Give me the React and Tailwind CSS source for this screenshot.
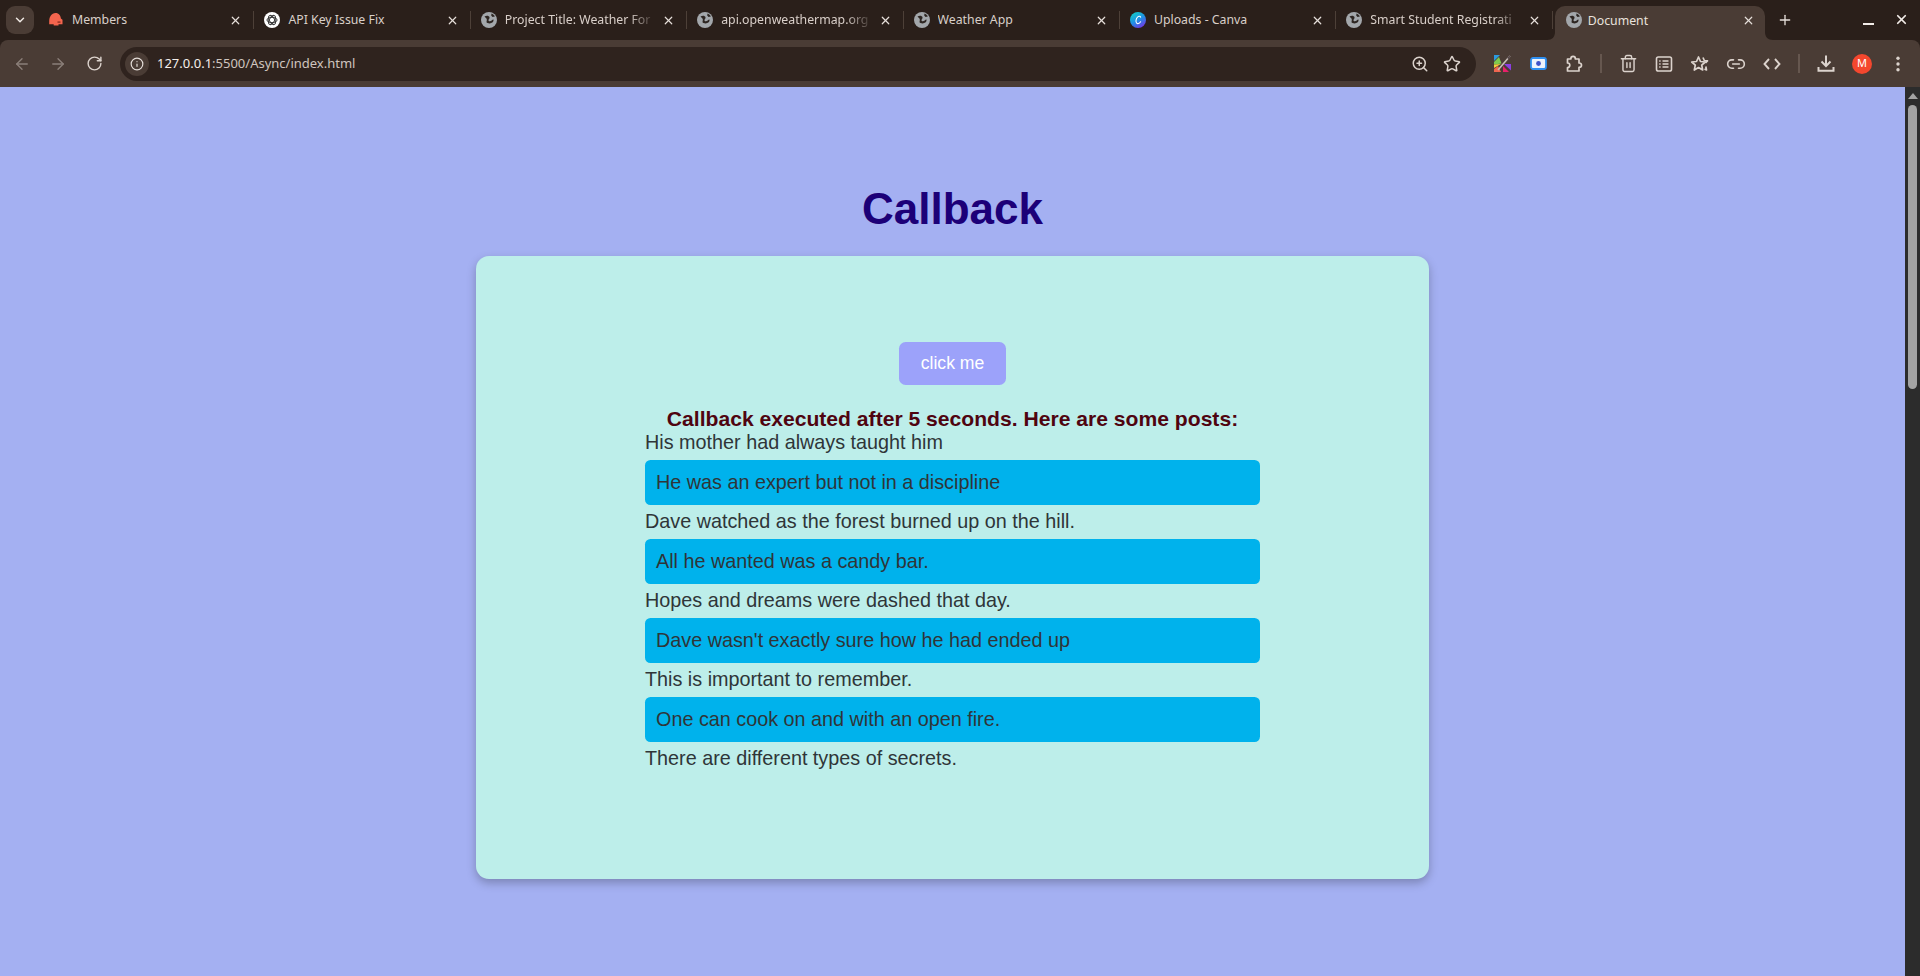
import React from "react";
import {
  ArrowLeft,
  ArrowRight,
  RotateCw,
  Info,
  ZoomIn,
  Star,
  Trash2,
  Link2,
  ChevronDown,
  X,
  Plus,
} from "lucide-react";

const tabs = [
  { title: "Members", icon: "members" },
  { title: "API Key Issue Fix", icon: "gpt" },
  { title: "Project Title: Weather For", icon: "globe", fade: true },
  { title: "api.openweathermap.org", icon: "globe", fade: true },
  { title: "Weather App", icon: "globe" },
  { title: "Uploads - Canva", icon: "canva" },
  { title: "Smart Student Registrati", icon: "globe", fade: true },
];

const posts = [
  { text: "His mother had always taught him" },
  { text: "He was an expert but not in a discipline", blue: true },
  { text: "Dave watched as the forest burned up on the hill." },
  { text: "All he wanted was a candy bar.", blue: true },
  { text: "Hopes and dreams were dashed that day." },
  { text: "Dave wasn't exactly sure how he had ended up", blue: true },
  { text: "This is important to remember." },
  { text: "One can cook on and with an open fire.", blue: true },
  { text: "There are different types of secrets." },
];

function Favicon({ type }) {
  if (type === "members") {
    return (
      <svg width="16" height="16" viewBox="0 0 16 16" className="shrink-0">
        <path d="M7.5 1c3.400 0 5.200 2.500 5.400 5.600l1.600 1.200v4.400h-4v1.300H5.700v-1.300H1.200V9.400C1.200 4.600 3.600 1 7.500 1z" fill="#f4654e" />
        <path d="M9.500 9.400h3v1.400h-3z" fill="#8e2f22" />
      </svg>
    );
  }
  if (type === "gpt") {
    return (
      <svg width="16" height="16" viewBox="0 0 16 16" className="shrink-0">
        <circle cx="8" cy="8" r="8" fill="#fff" />
        <g fill="none" stroke="#3a3a3a" strokeWidth="1">
          <ellipse cx="8" cy="8" rx="5" ry="2.600" />
          <ellipse cx="8" cy="8" rx="5" ry="2.600" transform="rotate(60 8 8)" />
          <ellipse cx="8" cy="8" rx="5" ry="2.600" transform="rotate(120 8 8)" />
        </g>
      </svg>
    );
  }
  if (type === "canva") {
    return (
      <svg width="16" height="16" viewBox="0 0 16 16" className="shrink-0">
        <defs>
          <linearGradient id="canvaGrad" x1="0.2" y1="0" x2="0.8" y2="1">
            <stop offset="0" stopColor="#13d0c8" />
            <stop offset="0.5" stopColor="#1f8fe4" />
            <stop offset="1" stopColor="#7b2fe3" />
          </linearGradient>
        </defs>
        <circle cx="8" cy="8" r="8" fill="url(#canvaGrad)" />
        <path d="M10.600 5.200C10.200 3.700 8 4 6.700 6.200c-1.300 2.400-.8 5.300 1 5.400 1.200.1 2.200-.7 2.900-1.800" fill="none" stroke="#fff" strokeWidth="1.100" strokeLinecap="round" />
      </svg>
    );
  }
  // globo padrao do chrome
  return (
    <svg width="16" height="16" viewBox="0 0 16 16" className="shrink-0">
      <circle cx="8" cy="8" r="8" fill="#a3a7ab" />
      <path d="M3.500 4.500c2-1.300 4.500-.9 5 .7.4 1.400-1 1.900-1 3 0 1.300 2 1.300 3.200.4l1.500-1.300c.6 1.200.3 2.200-.5 3-1.300 1.200-3.500 1.400-5.200.7C4.800 10.400 6 8.600 5.800 7.400 5.600 6.200 4.400 5.800 3.500 4.500z" fill="#2e2622" />
      <path d="M10.500 1.400c1.500.6 2.700 1.600 3.400 3l-2.400.6-1.300-1.400z" fill="#2e2622" />
    </svg>
  );
}

function Tab({ tab }) {
  return (
    <div className="relative flex items-center w-[216.4px] h-[28px] pl-[10px] pr-[12px] shrink-0">
      <Favicon type={tab.icon} />
      <span
        className={`ml-[8px] flex-1 overflow-hidden whitespace-nowrap text-[12.3px] text-[#d9cfc9] ${
          tab.fade ? "[mask-image:linear-gradient(to_right,black_82%,transparent)]" : ""
        }`}
      >
        {tab.title}
      </span>
      <X size={13} className="ml-[6px] text-[#e6dfda] shrink-0" strokeWidth={2.2} />
      <div className="absolute right-0 top-[5px] w-px h-[18px] bg-[#4d4038]" />
    </div>
  );
}

// cada icone da barra ocupa uma celula de 36px
function Cell({ children }) {
  return <div className="w-[36px] h-[36px] flex items-center justify-center shrink-0">{children}</div>;
}

function Divider() {
  return (
    <div className="w-[18px] flex justify-center shrink-0">
      <div className="w-[2px] h-[19px] bg-[#66574f]" />
    </div>
  );
}

const iconColor = "text-[#dcd3cd]";

export default function App() {
  return (
    <div className="h-screen overflow-hidden flex flex-col font-['Liberation_Sans',Arial,sans-serif]">
      {/* barra do navegador */}
      <div className="h-[87px] shrink-0 bg-[#2a1f1a] flex flex-col font-['Noto_Sans',sans-serif]">
        <div className="h-[40px] flex items-start pt-[6px] pl-[6px] shrink-0">
          <div className="w-[28px] h-[28px] rounded-[9px] bg-[#4a3c35] flex items-center justify-center shrink-0">
            <ChevronDown size={14} className="text-[#f0e9e4]" strokeWidth={2.5} />
          </div>
          <div className="flex ml-[4px]">
            {tabs.map((tab) => (
              <Tab key={tab.title} tab={tab} />
            ))}
          </div>
          {/* aba ativa */}
          <div className="relative ml-[2px] w-[210px] h-[34px] rounded-t-[10px] bg-[#4a3c35] flex items-start pt-[6px] pl-[11px] pr-[10px] shrink-0">
            <svg width="8" height="8" viewBox="0 0 8 8" className="absolute -left-[8px] bottom-0">
              <path d="M8 0v8H0c5 0 8-3 8-8z" fill="#4a3c35" />
            </svg>
            <Favicon type="globe" />
            <span className="ml-[6px] flex-1 text-[12.3px] text-[#e9e2dd]">Document</span>
            <X size={13} className="mt-[2px] text-[#e6dfda]" strokeWidth={2.2} />
            <svg width="8" height="8" viewBox="0 0 8 8" className="absolute -right-[8px] bottom-0">
              <path d="M0 0v8h8C3 8 0 5 0 0z" fill="#4a3c35" />
            </svg>
          </div>
          <Plus size={16} className="ml-[12px] mt-[6px] text-[#e6dfda] shrink-0" strokeWidth={2} />
          <div className="ml-[70px] mt-[17px] w-[11px] h-[2px] bg-[#f2ece8] shrink-0" />
          <X size={15} className="ml-[20px] mt-[6px] text-[#f2ece8] shrink-0" strokeWidth={2.8} />
        </div>

        <div className="flex-1 bg-[#4a3c35] rounded-t-[8px] flex items-center pl-[4px]">
          <Cell><ArrowLeft size={18} className="text-[#8b7f79]" strokeWidth={1.8} /></Cell>
          <Cell><ArrowRight size={18} className="text-[#8b7f79]" strokeWidth={1.8} /></Cell>
          <Cell><RotateCw size={17} className={iconColor} strokeWidth={2} /></Cell>
          <div className="ml-[8px] mr-[8px] w-[1356px] h-[34px] rounded-full bg-[#2f231e] flex items-center pl-[5px] pr-[15px] shrink-0">
            <div className="w-[24px] h-[24px] rounded-full bg-[#4a3c35] flex items-center justify-center">
              <Info size={14} className="text-[#e6dfda]" />
            </div>
            <span className="ml-[8px] flex-1 text-[13px] text-[#f5efeb]">
              127.0.0.1<span className="text-[#cfc5bf]">:5500/Async/index.html</span>
            </span>
            <ZoomIn size={18} className={iconColor} />
            <Star size={18} className={`ml-[14px] ${iconColor}`} strokeWidth={2} />
          </div>

          <Cell>
            <svg width="17" height="17" viewBox="0 0 17 17">
              <path d="M0 0h6l-6 6z" fill="#2b9be0" />
              <path d="M0 7l5-5 2.500 6.500-7.500 1z" fill="#7fc94f" />
              <path d="M0 9.500l7-.5-7 4z" fill="#f2cf3a" />
              <path d="M0 17v-3l4-3 3 6z" fill="#f0654f" />
              <path d="M9 17v-6l6 6z" fill="#e8206a" />
              <path d="M17 9v6.500L10 9z" fill="#8a3fe0" />
              <path d="M16 1L4 15" stroke="#c9bdb7" strokeWidth="1.600" />
              <path d="M15.500 .8l1 1-2 2.500-1.500-1.500z" fill="#55484a" />
            </svg>
          </Cell>
          <Cell>
            <svg width="17" height="13" viewBox="0 0 17 13">
              <rect x="1" y="1" width="15" height="11" rx="2" fill="#eef3fb" stroke="#2f8ff0" strokeWidth="1.800" />
              <circle cx="8.500" cy="6.500" r="2.400" fill="#3f51c8" />
            </svg>
          </Cell>
          <Cell>
            <svg width="20" height="20" viewBox="0 0 20 20" fill="none" stroke="#dcd3cd" strokeWidth="1.700" strokeLinejoin="round">
              <path d="M3.500 5h3.300c0-1.700 1-2.600 2.300-2.600s2.300.9 2.300 2.600H15v4c1.600 0 2.500 1 2.500 2.200S16.600 13.400 15 13.400V17H3.500v-3.500c1.500 0 2.300-1 2.300-2.300S5 9 3.500 9z" />
            </svg>
          </Cell>
          <Divider />
          <Cell><Trash2 size={19} className={iconColor} strokeWidth={1.8} /></Cell>
          <Cell>
            <svg width="18" height="18" viewBox="0 0 18 18" fill="none" stroke="#dcd3cd" strokeWidth="1.600">
              <rect x="1.500" y="2" width="15" height="14" rx="1.800" />
              <path d="M7.500 6h6M7.500 9h6M7.500 12h6M4.200 6h1.400M4.200 9h1.400M4.200 12h1.400" />
            </svg>
          </Cell>
          <Cell>
            <svg width="20" height="20" viewBox="0 0 20 20" fill="none" stroke="#dcd3cd" strokeWidth="1.700" strokeLinejoin="round">
              <path d="M8.500 3l2 4.500 4.800.5-3.600 3.200 1 4.800-4.200-2.500L4.300 16l1-4.800L1.700 8l4.800-.5z" />
              <path d="M13 3.500l1.300 3 3.200.4-2 1.900M15.800 12.500l.7 3.500-2-1.100" />
            </svg>
          </Cell>
          <Cell><Link2 size={20} className={iconColor} strokeWidth={1.9} /></Cell>
          <Cell>
            <svg width="18" height="14" viewBox="0 0 18 14" fill="none" stroke="#dcd3cd" strokeWidth="1.900">
              <path d="M6 2L1.500 7 6 12M12 2l4.500 5-4.500 5" />
            </svg>
          </Cell>
          <Divider />
          <Cell>
            <svg width="18" height="19" viewBox="0 0 18 19" fill="none" stroke="#dcd3cd" strokeWidth="2">
              <path d="M9 1.500v10M4.500 7.500L9 12l4.500-4.500M1.500 13v3.800h15V13" />
            </svg>
          </Cell>
          <Cell>
            <div className="w-[20px] h-[20px] rounded-full bg-[#f4472e] flex items-center justify-center text-[11px] text-white">M</div>
          </Cell>
          <Cell>
            <svg width="4" height="16" viewBox="0 0 4 16" fill="#dcd3cd">
              <circle cx="2" cy="2.200" r="1.700" />
              <circle cx="2" cy="8" r="1.700" />
              <circle cx="2" cy="13.800" r="1.700" />
            </svg>
          </Cell>
        </div>
      </div>

      <div className="flex-1 flex min-h-0">
        {/* pagina */}
        <div className="flex-1 bg-[#a4b0f2] flex flex-col items-center pt-[96px]">
          <h1 className="text-[44px] leading-[52px] font-bold text-[#1c0078]">Callback</h1>
          <div className="mt-[21px] w-[953px] h-[623px] rounded-[13px] bg-[#bdeeea] shadow-[0_4px_10px_rgba(0,0,0,0.25)] flex flex-col items-center pt-[86px]">
            <button className="w-[107px] h-[43px] rounded-[6.6px] bg-[#9ca2fa] text-white text-[17.6px]">click me</button>
            <p className="mt-[22px] text-[21.12px] leading-[24px] font-bold text-[#4f0410]">
              Callback executed after 5 seconds. Here are some posts:
            </p>
            <div className="w-[615px] text-[19.8px] text-[#2f3538]">
              {posts.map((post) =>
                post.blue ? (
                  <div key={post.text} className="my-[5.5px] h-[45px] px-[11px] pt-[1px] flex items-center rounded-[5.5px] bg-[#00b2ec]">
                    {post.text}
                  </div>
                ) : (
                  <div key={post.text} className="h-[23px] leading-[22px]">{post.text}</div>
                )
              )}
            </div>
          </div>
        </div>

        {/* barra de rolagem */}
        <div className="w-[15px] bg-[#2c2c2c] flex flex-col items-center pt-[6px]">
          <div className="w-0 h-0 border-x-[5px] border-x-transparent border-b-[6px] border-b-[#a3a3a3]" />
          <div className="mt-[6px] w-[9px] h-[284px] rounded-full bg-[#a3a3a3]" />
        </div>
      </div>
    </div>
  );
}
